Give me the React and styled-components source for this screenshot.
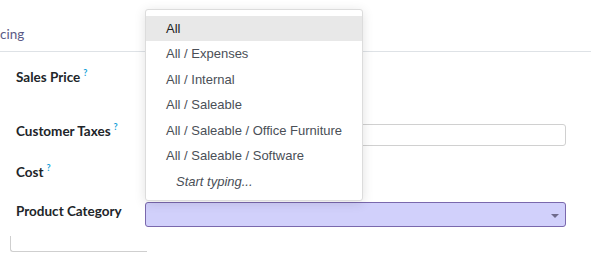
import React from "react";
import styled, { createGlobalStyle } from "styled-components";

const GlobalStyle = createGlobalStyle`
  html, body {
    margin: 0;
    padding: 0;
    background: #fff;
  }
  body {
    font-family: Lato, "Noto Sans", sans-serif;
    overflow: hidden;
  }
`;

const Page = styled.div`
  width: 591px;
  height: 267px;
  position: relative;
  overflow: hidden;
`;

const TabBar = styled.div`
  height: 52px;
  border-bottom: 1px solid #dee2e6;
  display: flex;
  align-items: flex-end;
  box-sizing: border-box;
  padding-bottom: 7px;
`;

const Tab = styled.span`
  font-size: 13.5px;
  line-height: 20px;
  color: #5b5a86;
`;

const Form = styled.div`
  display: grid;
  grid-template-columns: 129px 421px;
  padding-left: 16px;
`;

const Label = styled.div`
  font-weight: 700;
  font-size: 13.5px;
  line-height: 20px;
  color: #212529;
  height: ${(p) => p.$h}px;
  padding-top: ${(p) => p.$pt}px;
  box-sizing: border-box;
  white-space: nowrap;
`;

const Help = styled.sup`
  color: #17a2d8;
  font-size: 9px;
  font-weight: 700;
  margin-left: 3px;
  vertical-align: 6px;
  line-height: 0;
`;

const Cell = styled.div`
  padding-top: ${(p) => p.$pt}px;
  box-sizing: border-box;
`;

const Input = styled.div`
  height: 22px;
  border: 1px solid #d0d0d0;
  border-radius: 3px;
  box-sizing: border-box;
`;

const SelectWrap = styled.div`
  position: relative;
`;

const Select = styled.div`
  height: 25px;
  background: #d1d0fb;
  border: 1px solid #7a68ad;
  border-radius: 3px;
  box-sizing: border-box;
  display: flex;
  align-items: center;
  justify-content: flex-end;
  padding-right: 6px;
`;

const Caret = styled.span`
  width: 0;
  height: 0;
  border-left: 4px solid transparent;
  border-right: 4px solid transparent;
  border-top: 4px solid #6f6a8c;
  margin-top: 2px;
`;

const Menu = styled.ul`
  position: absolute;
  left: 0;
  bottom: calc(100% + 1px);
  width: 218px;
  margin: 0;
  padding: 6px 0 6px;
  list-style: none;
  background: #fff;
  border: 1px solid #dcdcdc;
  border-radius: 3px;
  box-shadow: 0 2px 12px rgba(0, 0, 0, 0.12);
  box-sizing: border-box;
  font-family: "Liberation Sans", Arial, sans-serif;
  font-size: 13px;
  color: #4a4f57;
`;

const Item = styled.li`
  height: 25.5px;
  display: flex;
  align-items: center;
  padding-left: ${(p) => (p.$hint ? 30 : 20)}px;
  background: ${(p) => (p.$active ? "#e8e8e8" : "transparent")};
  color: ${(p) => (p.$active ? "#222" : "inherit")};
  font-style: ${(p) => (p.$hint ? "italic" : "normal")};
  white-space: nowrap;
`;

const Footer = styled.div`
  margin: 9px 0 0 10px;
  width: 137px;
  height: 16px;
  border-left: 1px solid #cfcfcf;
  border-bottom: 1px solid #cfcfcf;
  border-bottom-left-radius: 3px;
  box-sizing: border-box;
`;

const categories = [
  "All",
  "All / Expenses",
  "All / Internal",
  "All / Saleable",
  "All / Saleable / Office Furniture",
  "All / Saleable / Software",
];

export default function App() {
  return (
    <Page>
      <GlobalStyle />
      <TabBar>
        <Tab>cing</Tab>
      </TabBar>
      <Form>
        <Label $h={64} $pt={15}>
          Sales Price<Help>?</Help>
        </Label>
        <Cell />
        <Label $h={40} $pt={5}>
          Customer Taxes<Help>?</Help>
        </Label>
        <Cell $pt={8}>
          <Input />
        </Cell>
        <Label $h={42} $pt={6}>
          Cost<Help>?</Help>
        </Label>
        <Cell />
        <Label $h={28} $pt={3}>
          Product Category
        </Label>
        <Cell $pt={4}>
          <SelectWrap>
            <Select>
              <Caret />
            </Select>
            <Menu>
              {categories.map((c, i) => (
                <Item key={c} $active={i === 0}>
                  {c}
                </Item>
              ))}
              <Item $hint>Start typing...</Item>
            </Menu>
          </SelectWrap>
        </Cell>
      </Form>
      <Footer />
    </Page>
  );
}
